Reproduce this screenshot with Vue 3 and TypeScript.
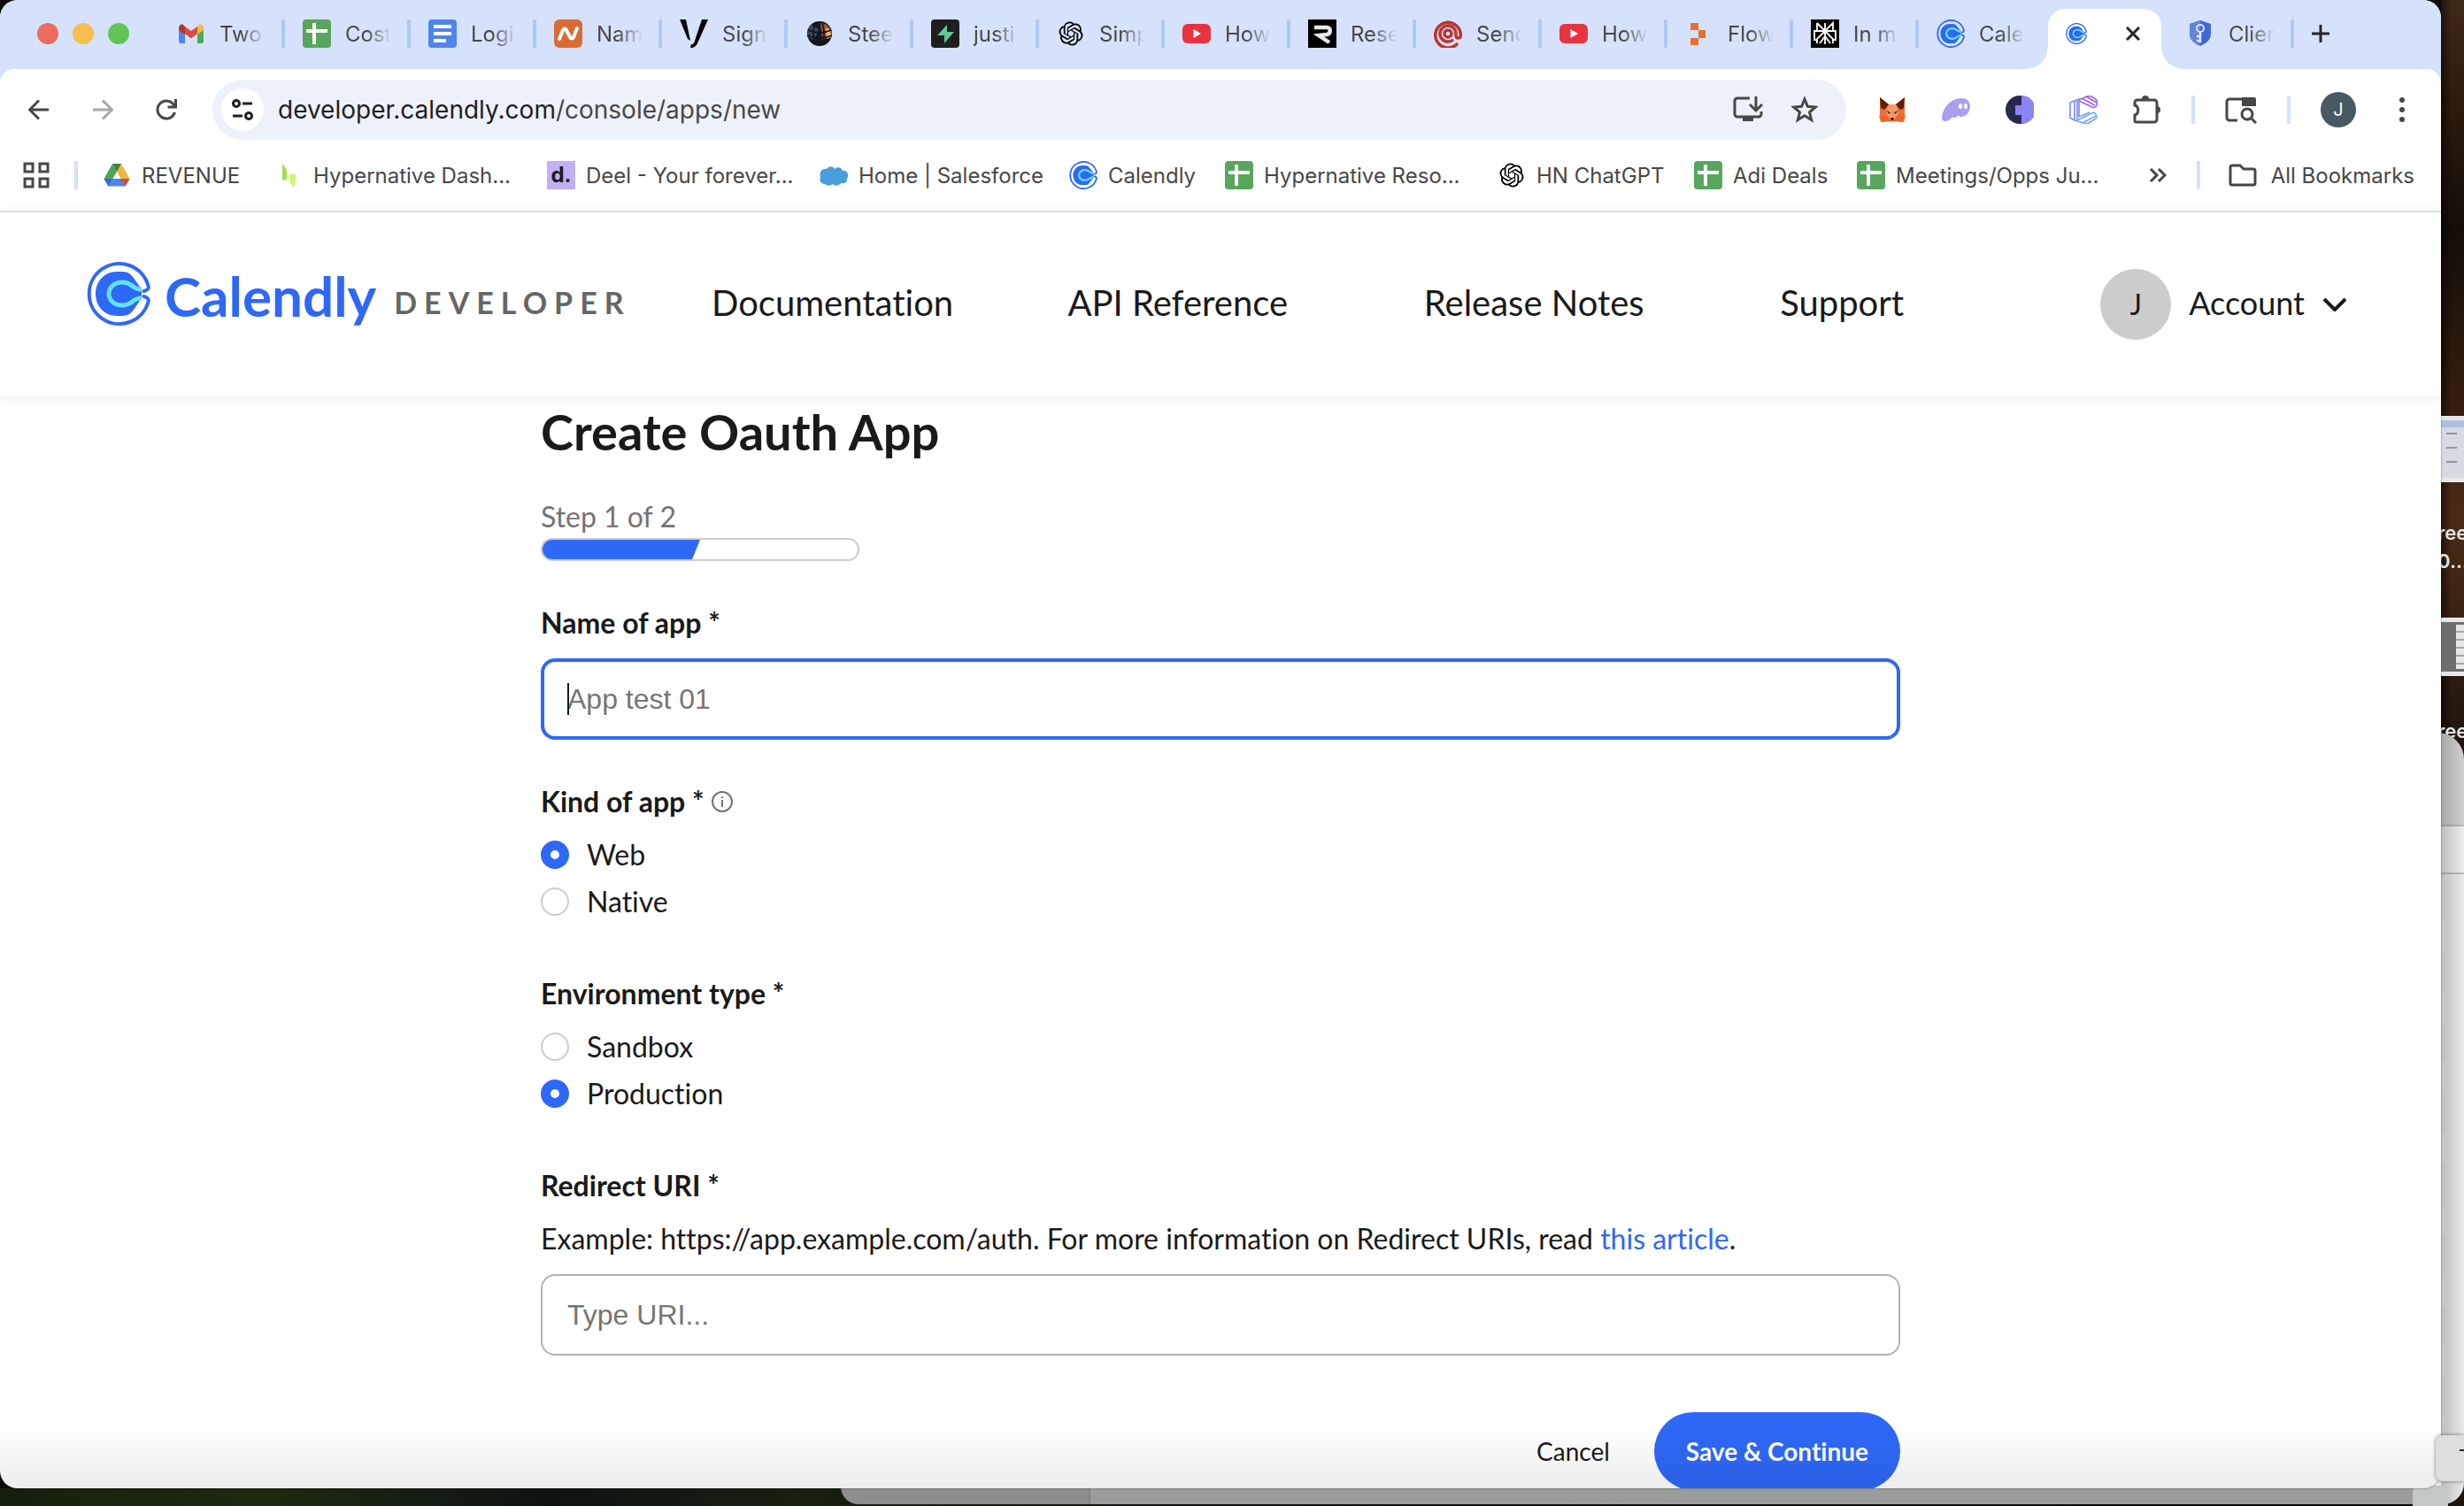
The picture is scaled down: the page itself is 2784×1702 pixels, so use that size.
<script setup lang="ts">
import { ref } from 'vue'

interface Tab {
  icon: string
  title: string
}

const openai =
  '<path transform="translate(2.5 2.5) scale(1.125)" d="M22.2819 9.8211a5.9847 5.9847 0 0 0-.5157-4.9108 6.0462 6.0462 0 0 0-6.5098-2.9A6.0651 6.0651 0 0 0 4.9807 4.1818a5.9847 5.9847 0 0 0-3.9977 2.9 6.0462 6.0462 0 0 0 .7427 7.0966 5.98 5.98 0 0 0 .511 4.9107 6.051 6.051 0 0 0 6.5146 2.9001A5.9847 5.9847 0 0 0 13.2599 24a6.0557 6.0557 0 0 0 5.7718-4.2058 5.9894 5.9894 0 0 0 3.9977-2.9001 6.0557 6.0557 0 0 0-.7475-7.0729zm-9.022 12.6081a4.4755 4.4755 0 0 1-2.8764-1.0408l.1419-.0804 4.7783-2.7582a.7948.7948 0 0 0 .3927-.6813v-6.7369l2.02 1.1686a.071.071 0 0 1 .038.052v5.5826a4.504 4.504 0 0 1-4.4945 4.4944zm-9.6607-4.1254a4.4708 4.4708 0 0 1-.5346-3.0137l.142.0852 4.783 2.7582a.7712.7712 0 0 0 .7806 0l5.8428-3.3685v2.3324a.0804.0804 0 0 1-.0332.0615L9.74 19.9502a4.4992 4.4992 0 0 1-6.1408-1.6464zM2.3408 7.8956a4.485 4.485 0 0 1 2.3655-1.9728V11.6a.7664.7664 0 0 0 .3879.6765l5.8144 3.3543-2.0201 1.1685a.0757.0757 0 0 1-.071 0l-4.8303-2.7865A4.504 4.504 0 0 1 2.3408 7.872zm16.5963 3.8558L13.1038 8.364 15.1192 7.2a.0757.0757 0 0 1 .071 0l4.8303 2.7913a4.4944 4.4944 0 0 1-.6765 8.1042v-5.6772a.79.79 0 0 0-.407-.667zm2.0107-3.0231l-.142-.0852-4.7735-2.7818a.7759.7759 0 0 0-.7854 0L9.409 9.2297V6.8974a.0662.0662 0 0 1 .0284-.0615l4.8303-2.7866a4.4992 4.4992 0 0 1 6.6802 4.66zM8.3065 12.863l-2.02-1.1638a.0804.0804 0 0 1-.038-.0567V6.0742a4.4992 4.4992 0 0 1 7.3757-3.4537l-.142.0805L8.704 5.459a.7948.7948 0 0 0-.3927.6813zm1.0976-2.3654l2.602-1.4998 2.6069 1.4998v2.9994l-2.5974 1.4997-2.6067-1.4997Z"/>'

const calendly =
  '<g transform="scale(.4445)"><path d="M69.500 27A34 34 0 1 0 69.500 45c1-3-1-5-5-6M69.500 27c1 3-1 5-5 6" fill="none" stroke="#2e68f7" stroke-width="4" stroke-linecap="round"/><path d="M34 11h6c8 0 11 4 15 10l7 10v10l-7 10c-4 6-7 10-15 10h-6C20 61 10 50 10 36S20 11 34 11z" fill="#2e68f7"/><path d="M62 31c-6 0-9-2-12-5-3-2-6-3-10-3-9 0-15 6-15 13s6 13 15 13c4 0 7-1 10-3 3-3 6-5 12-5" fill="none" stroke="#62e2f0" stroke-width="5"/></g>'

const icons: Record<string, string> = {
  openai,
  calendly,
  gmail:
    '<path d="M2 10v15a2 2 0 0 0 2 2h5V15z" fill="#4b85ee"/><path d="M30 10v15a2 2 0 0 1-2 2h-5V15z" fill="#4caa57"/><path d="M9 16V8l7 5 7-5v8l-7 5.500z" fill="#dc4b3e"/><path d="M2 10v2l7 5V8L7 6C5 4.500 2 6 2 10z" fill="#b5322a"/><path d="M30 10v2l-7 5V8l2-2c2-1.500 5 0 5 4z" fill="#f3bd42"/>',
  sheets:
    '<rect width="32" height="32" rx="4" fill="#58a55c"/><path d="M4 13h24M13 4v24" stroke="#fff" stroke-width="4"/>',
  docs: '<rect width="32" height="32" rx="4" fill="#5084ed"/><path d="M6 8h20M6 16h20M6 24h14" stroke="#fff" stroke-width="4"/>',
  name: '<rect width="32" height="32" rx="6" fill="#d96b36"/><path d="M6 22 10 12c1-2 3-2 4 0l4 8c1 2 3 2 4 0l4-10" fill="none" stroke="#fff" stroke-width="4" stroke-linecap="round"/>',
  vee: '<path d="M0 0h7l5 24-3-2z"/><path d="M25 0h7L20 27c-2 4-4 5-8 5l1-4c3 0 3-1 4-4z"/>',
  disco:
    '<circle cx="16" cy="16" r="14" fill="#15171f"/><path d="M3 20a14 14 0 0 1 4-14l8 5-5 13z" fill="#3c4763"/><path d="M17 4a13 13 0 0 1 13 14l-11 5z" fill="#9a5230"/><path d="M23 9l5 3 1 8-5 2z" fill="#f3b47c"/><path d="M3 12q13 6 26 0M2 18q14 6 28 0M11 3q-4 13 0 26M19 3q4 13 0 26" fill="none" stroke="#10131b" stroke-width="1.500"/>',
  bolt: '<rect width="32" height="32" rx="4" fill="#1e1e1e"/><path d="M18 6v8h8L15 27v-9H7z" fill="#5fc792"/>',
  youtube: '<rect y="5" width="32" height="22" rx="6" fill="#ea3340"/><path d="M12.500 11v10l8.500-5z" fill="#fff"/>',
  resend: '<path d="M0 0h32v32H0z"/><path d="M7 9h14c5 0 5 7 0 8l-9 1 12 8" fill="none" stroke="#e8e8e8" stroke-width="4.500"/>',
  at: '<g fill="none" stroke="#b93632" stroke-width="3.500"><path d="M27 27A14.300 14.300 0 1 1 30.300 16v2c0 4-5.300 4-5.300 0v-2a9 9 0 1 0-3 6.800"/><circle cx="16" cy="16" r="4"/></g>',
  flow: '<path d="M6 4h9v8H6zM6 21h9v8H6zM15 12h8v9h-8z" fill="#e6702f"/>',
  plex: '<path d="M0 0h32v32H0z"/><path d="M16 4v24M7 4l9 9 9-9v9M7 4v9M16 13l-9 9v5M16 13l9 9v5M7 13H4v10h4M25 13h3v10h-4M4 13h24M10 27l6-8 6 8" fill="none" stroke="#fff" stroke-width="1.800"/>',
  shield:
    '<path d="M16 1 28 5v11c0 7-5 11-12 14C9 27 4 23 4 16V5z" fill="#4068d4"/><path d="M16 1v29C9 27 4 23 4 16V5z" fill="#6485dc"/><circle cx="16" cy="10" r="4" fill="none" stroke="#dce8ff" stroke-width="2"/><path d="M16 14v12M16 19h-4M16 24h-4" stroke="#dce8ff" stroke-width="2.500"/>',
  drive:
    '<path d="M11 3h10l9.500 17h-10z" fill="#f0b63d"/><path d="M11 3 1.500 20l5 8.500L16 12z" fill="#4fa35b"/><path d="M6.500 28.500 11 20h19.500l-5 8.500z" fill="#5084ed"/><path d="M20.500 20h10l-5 8.500z" fill="#dc4b3e"/><path d="M1.500 20H11l-4.500 8.500z" fill="#3568d4"/><path d="M11 3h10l-5 9z" fill="#3a8344"/>',
  hyper: '<path d="M9 3l5 7v5h10v8l-2 7-4-6v-4l-9 1z" fill="#cdf76c"/><path d="M9 3l5 7v11l-5 1z" fill="#a6da55"/><circle cx="16" cy="17" r="2" fill="#f0ffd0"/>',
  cloud:
    '<path d="M6 26c-4 0-7-4-5-8-2-5 2-10 7-9 3-4 8-3 9 0 3-3 8-2 9 2 5-1 8 4 5 9 0 5-4 6-7 5-2 3-7 4-9 1-3 2-7 2-9 0z" fill="#4a9ddb"/>',
}

const tabs: Tab[] = [
  { icon: 'gmail', title: 'Two-' },
  { icon: 'sheets', title: 'Cost' },
  { icon: 'docs', title: 'Logi' },
  { icon: 'name', title: 'Nam' },
  { icon: 'vee', title: 'Sign' },
  { icon: 'disco', title: 'Stee' },
  { icon: 'bolt', title: 'justi' },
  { icon: 'openai', title: 'Simp' },
  { icon: 'youtube', title: 'How' },
  { icon: 'resend', title: 'Rese' },
  { icon: 'at', title: 'Send' },
  { icon: 'youtube', title: 'How' },
  { icon: 'flow', title: 'Flow' },
  { icon: 'plex', title: 'In m' },
  { icon: 'calendly', title: 'Cale' },
]

const bookmarks: Tab[] = [
  { icon: 'drive', title: 'REVENUE' },
  { icon: 'hyper', title: 'Hypernative Dash...' },
  { icon: 'deel', title: 'Deel - Your forever...' },
  { icon: 'cloud', title: 'Home | Salesforce' },
  { icon: 'calendly', title: 'Calendly' },
  { icon: 'sheets', title: 'Hypernative Reso...' },
  { icon: 'openai', title: 'HN ChatGPT' },
  { icon: 'sheets', title: 'Adi Deals' },
  { icon: 'sheets', title: 'Meetings/Opps Ju...' },
]

const navLinks = ['Documentation', 'API Reference', 'Release Notes', 'Support']

const address = ref('')
const kind = ref('Web')
const environment = ref('Production')
const appName = ref('')
const redirectUri = ref('')
</script>

<template>
  <div class="desktop">
    <div class="side" aria-hidden="true">
      <div class="thumb thumb-sheet"><i></i><i></i><i></i></div>
      <div class="thumb thumb-form"><i></i></div>
      <span class="file-name file-a">ree<br />0...</span>
      <span class="file-name file-b">ree</span>
    </div>
    <div class="back-window" aria-hidden="true">
      <div class="back-rows"><i v-for="n in 9" :key="n"></i></div>
    </div>

    <div class="window">
      <div class="tabstrip">
        <div class="lights">
          <button class="light red" aria-label="Close window"></button>
          <button class="light amber" aria-label="Minimise window"></button>
          <button class="light green" aria-label="Zoom window"></button>
        </div>
        <button v-for="(tab, i) in tabs" :key="i" class="tab">
          <svg class="ico" viewBox="0 0 32 32" v-html="icons[tab.icon]"></svg>
          <span class="tab-title">{{ tab.title }}</span>
        </button>
        <div class="active-slot">
          <div class="tab-active">
            <svg class="ico-small" viewBox="0 0 32 32" v-html="icons.calendly"></svg>
            <button class="close" aria-label="Close tab">
              <svg viewBox="0 0 16 16"><path d="M1 1l14 14M15 1L1 15" /></svg>
            </button>
          </div>
        </div>
        <button class="tab last">
          <svg class="ico" viewBox="0 0 32 32" v-html="icons.shield"></svg>
          <span class="tab-title">Clien</span>
        </button>
        <button class="plus" aria-label="New tab">
          <svg viewBox="0 0 20 20"><path d="M10 0v20M0 10h20" /></svg>
        </button>
      </div>

      <div class="chrome">
        <div class="toolbar">
          <div class="nav-buttons">
            <button aria-label="Back">
              <svg viewBox="0 0 24 24"><path d="M23 12H2M12 1.500 1.500 12 12 22.500" /></svg>
            </button>
            <button class="dim" aria-label="Forward">
              <svg viewBox="0 0 24 24"><path d="M1 12h21M12 1.500 22.500 12 12 22.500" /></svg>
            </button>
            <button aria-label="Reload">
              <svg viewBox="0 0 24 24"><path d="M21.500 15A10 10 0 1 1 20 6l2.500 3M22.500 0v9h-9" /></svg>
            </button>
          </div>
          <div class="omnibox">
            <button class="site-info" aria-label="Site information">
              <svg viewBox="0 0 24 24">
                <circle cx="5" cy="5" r="3.500" /><path d="M12 5h11M1 19h11" /><circle cx="19" cy="19" r="3.500" />
              </svg>
            </button>
            <label class="url">
              <span>developer.calendly.com</span><span class="path">/console/apps/new</span>
              <input v-model="address" aria-label="Address" />
            </label>
            <button aria-label="Install">
              <svg class="w34" viewBox="0 0 34 30">
                <path d="M19 2H5a3 3 0 0 0-3 3v15a3 3 0 0 0 3 3h24a3 3 0 0 0 3-3v-3M26 0v15M19 9l7 7 7-7" />
                <path d="M11 23h12v5H11z" fill="currentColor" stroke="none" />
              </svg>
            </button>
            <button aria-label="Bookmark this page">
              <svg class="w30" viewBox="0 0 30 30">
                <path d="M15 3l3.400 8.300 9 .7-6.900 5.800 2.200 8.700-7.700-4.700-7.700 4.700 2.200-8.700L2.600 12l9-.7z" />
              </svg>
            </button>
          </div>
          <div class="extensions">
            <button aria-label="Wallet">
              <svg viewBox="0 0 32 32">
                <path d="M2 2l10 8h8l10-8v20l1 1-2 7-8-1-5 2-5-2-8 1-2-7 1-1z" fill="#e8713a" />
                <path d="M2 2l10 8-5 6-4-2zM30 2l-10 8 5 6 4-2z" fill="#5f1e0c" />
                <path d="M12 10h8l3 9-4 8h-6l-4-8z" fill="#f39a6c" />
                <path d="M9 17l5 2-1 2zM23 17l-5 2 1 2z" fill="#3c1d14" />
                <path d="M3 23l8 0 3 5-9 2zM29 23l-8 0-3 5 9 2z" fill="#ee6228" />
                <path d="M13 29h6l-1 2h-4z" fill="#e3dcd8" /><path d="M14 25h4l-1 3h-2z" fill="#2a1410" />
              </svg>
            </button>
            <button aria-label="Ghost">
              <svg viewBox="0 0 32 32">
                <path d="M0 25C1 14 10 3 22 3c7 0 10 4 10 9 0 7-5 12-10 12-2 0-3-1-3-2-2 3-6 4-7 2-3 4-6 5-8 5s-4-1-4-4z" fill="#ab9ff0" />
                <ellipse cx="21" cy="12" rx="2" ry="3" fill="#fff" /><ellipse cx="27" cy="12" rx="2" ry="3" fill="#fff" />
              </svg>
            </button>
            <button aria-label="Contrast">
              <svg viewBox="0 0 32 32">
                <circle cx="16" cy="16" r="16" fill="#28274c" />
                <path d="M18 0a16 16 0 0 1 0 32V22h-7V11h7z" fill="#8a85f5" />
              </svg>
            </button>
            <button aria-label="Ribbon">
              <svg viewBox="0 0 32 32" fill="none" stroke-width="1.600">
                <path d="M11 5 20 1c2-1 3-1 5 0l6 4c1 1 1 3 0 6-1 2-3 3-5 2L11 6M14 3l15 8M19 1l12 7" stroke="#9b5fec" />
                <path d="M1 8 11 4v20M1 8v17l5 3V6M9 5v24" stroke="#7c8cf0" />
                <path d="M6 28l10 3c2 1 4 1 6 0l8-5c1-1 1-3 0-5-1-2-3-2-5-1L9 28M11 24l12-5M15 31l15-8" stroke="#6fa8ee" />
              </svg>
            </button>
            <button aria-label="Extensions">
              <svg class="line" viewBox="0 0 32 32">
                <path d="M2 8a3 3 0 0 1 3-3h19a3 3 0 0 1 3 3v19a3 3 0 0 1-3 3H4a2 2 0 0 1-2-2v-6c5-1 5-10 0-11z" />
                <path d="M10 4a4 4 0 0 1 8 0zM27 12a4 4 0 0 1 0 8z" fill="currentColor" stroke="none" />
              </svg>
            </button>
            <i class="bar"></i>
            <button aria-label="Search side panel">
              <svg class="w36" viewBox="0 0 36 32">
                <path d="M14 28H5a3 3 0 0 1-3-3V7a3 3 0 0 1 3-3h27M29 25l6 6" />
                <path d="M19 2h14a2 2 0 0 1 2 2v8H19z" fill="currentColor" stroke="none" /><circle cx="25" cy="21" r="6" />
              </svg>
            </button>
            <i class="bar"></i>
            <button class="profile" aria-label="Profile J">J</button>
            <button class="more" aria-label="Menu">
              <svg viewBox="0 0 8 32">
                <g fill="currentColor" stroke="none"><circle cx="4" cy="5" r="3" /><circle cx="4" cy="16" r="3" /><circle cx="4" cy="27" r="3" /></g>
              </svg>
            </button>
          </div>
        </div>

        <div class="bookmarks">
          <button class="apps" aria-label="Apps">
            <svg viewBox="0 0 30 30"><path d="M2 2h9v9H2zM19 2h9v9h-9zM2 19h9v9H2zM19 19h9v9h-9z" /></svg>
          </button>
          <i class="bar"></i>
          <div class="bookmark-list">
            <a v-for="(mark, i) in bookmarks" :key="i" href="#" class="bookmark">
              <span v-if="mark.icon === 'deel'" class="deel">d.</span>
              <svg v-else class="ico" viewBox="0 0 32 32" v-html="icons[mark.icon]"></svg>
              {{ mark.title }}
            </a>
          </div>
          <button class="overflow" aria-label="More bookmarks">
            <svg viewBox="0 0 20 18"><path d="M2 2l7 7-7 7M11 2l7 7-7 7" /></svg>
          </button>
          <i class="bar"></i>
          <button class="all">
            <svg viewBox="0 0 32 26"><path d="M2 4a2 2 0 0 1 2-2h9l4 4h11a2 2 0 0 1 2 2v14a2 2 0 0 1-2 2H4a2 2 0 0 1-2-2z" /></svg>
            All Bookmarks
          </button>
        </div>
      </div>

      <header class="site-header">
        <a class="brand" href="#">
          <svg class="brand-mark" viewBox="0 0 32 32" v-html="icons.calendly"></svg>
          <span class="brand-name">Calendly</span>
          <span class="brand-sub">DEVELOPER</span>
        </a>
        <nav class="site-nav">
          <a v-for="link in navLinks" :key="link" href="#">{{ link }}</a>
        </nav>
        <button class="account">
          <span class="avatar">J</span>
          <span class="account-name">Account</span>
          <svg viewBox="0 0 28 16"><path d="M2 2l12 12L26 2" /></svg>
        </button>
      </header>

      <main class="page">
        <form class="form" @submit.prevent>
          <h1>Create Oauth App</h1>
          <p class="step">Step 1 of 2</p>
          <div class="progress" role="progressbar" aria-valuenow="1" aria-valuemin="0" aria-valuemax="2"><i></i></div>

          <label class="label" for="app-name">Name of app *</label>
          <div class="field">
            <input id="app-name" v-model="appName" class="text focused" type="text" placeholder="App test 01" />
            <i class="caret"></i>
          </div>

          <fieldset>
            <legend class="label">
              Kind of app *
              <svg class="info" viewBox="0 0 24 24"><circle cx="12" cy="12" r="11" /><path d="M12 10v8M12 6v2" /></svg>
            </legend>
            <label class="option"><input v-model="kind" type="radio" name="kind" value="Web" />Web</label>
            <label class="option"><input v-model="kind" type="radio" name="kind" value="Native" />Native</label>
          </fieldset>

          <fieldset>
            <legend class="label">Environment type *</legend>
            <label class="option"><input v-model="environment" type="radio" name="env" value="Sandbox" />Sandbox</label>
            <label class="option"><input v-model="environment" type="radio" name="env" value="Production" />Production</label>
          </fieldset>

          <label class="label" for="redirect-uri">Redirect URI *</label>
          <p class="hint">
            Example: https://app.example.com/auth. For more information on Redirect URIs, read <a href="#">this article</a>.
          </p>
          <input id="redirect-uri" v-model="redirectUri" class="text" type="text" placeholder="Type URI..." />

          <div class="actions">
            <button type="button" class="cancel">Cancel</button>
            <button type="submit" class="save">Save &amp; Continue</button>
          </div>
        </form>
      </main>
    </div>

    <div class="peek" aria-hidden="true"><i></i></div>
  </div>
</template>

<style>
body {
  margin: 0;
  overflow: hidden;
}
</style>

<style scoped>
* {
  box-sizing: border-box;
}
button {
  margin: 0;
  padding: 0;
  border: 0;
  background: none;
  font: inherit;
  color: inherit;
}
a {
  color: inherit;
  text-decoration: none;
}
svg {
  display: block;
  flex: none;
}
p,
h1 {
  margin: 0;
}

.desktop {
  position: relative;
  display: flex;
  height: 100vh;
  padding: 0 26px 20px 0;
  overflow: hidden;
  background:
    linear-gradient(90deg, #14200e 0, #1d2b10 300px, #0c1413 620px, #16210f 900px, #120f0a 1500px, #0c0906 100%) bottom / 100% 20px no-repeat,
    #0b0c08;
  font-family: Inter, 'Liberation Sans', sans-serif;
  color: #474747;
}
.side {
  position: absolute;
  top: 0;
  right: 0;
  bottom: 0;
  width: 26px;
  background: linear-gradient(90deg, rgba(0, 0, 0, 0.5), transparent 12px), linear-gradient(#3f2918, #2b1a0d 120px, #150d06 260px, #2a190d 400px, #4a2a16 580px, #3d2413 680px, #20150d 830px);
}
.thumb {
  position: absolute;
  left: 0;
  width: 26px;
  border: solid #e8e8e8;
  border-width: 5px 0;
}
.thumb-sheet {
  top: 470px;
  height: 75px;
  background: linear-gradient(#aebfe0 8px, #d6dbe2 8px);
}
.thumb-sheet i {
  display: block;
  width: 12px;
  height: 2px;
  margin: 14px 0 0 6px;
  background: #8d9694;
}
.thumb-form {
  top: 698px;
  height: 66px;
  background: #6e6e6e;
}
.thumb-form i {
  display: block;
  height: 50px;
  margin: 3px 0 0 17px;
  background: repeating-linear-gradient(#e6e6e6 0 7px, #a5a5a5 7px 9px);
}
.file-name {
  position: absolute;
  left: -4px;
  font-size: 22px;
  line-height: 32px;
  font-weight: 600;
  color: #e2e2e2;
}
.file-a {
  top: 586px;
}
.file-b {
  top: 810px;
}
.back-window {
  position: absolute;
  top: 828px;
  right: 0;
  bottom: 2px;
  left: 950px;
  padding-top: 211px;
  border-radius: 0 30px 24px 20px;
  background:
    linear-gradient(90deg, rgba(0, 0, 0, 0.2), transparent) right / 26px 100% no-repeat,
    linear-gradient(90deg, #8e8e8e 280px, #828382 280px 282px, #9b9d9c 282px, #9b9d9c 1790px, transparent 1800px) bottom / 100% 20px no-repeat,
    linear-gradient(#d0d0d0 104px, #b8b8b8 104px 106px, #ededed 106px 158px, #bdbdbd 158px 160px, #ebebeb 160px);
}
.back-rows {
  display: flex;
  flex-direction: column;
  align-items: flex-end;
  gap: 42px;
  padding-right: 18px;
}
.back-rows i {
  width: 40px;
  height: 38px;
  border-radius: 8px;
  background: #c3c7c6;
}
.peek {
  position: absolute;
  right: 0;
  bottom: 28px;
  width: 32px;
  height: 52px;
  padding: 16px 0 0 27px;
  border-radius: 8px 0 0 8px;
  background: #dededd;
  box-shadow: 0 0 4px rgba(0, 0, 0, 0.5);
}
.peek i {
  display: block;
  height: 2px;
  background: #1d2a2a;
}

.window {
  position: relative;
  flex: 1;
  min-width: 0;
  overflow: hidden;
  border-radius: 20px;
  background: #fff;
  box-shadow: 0 0 2px rgba(0, 0, 0, 0.6);
}
.window::after {
  content: '';
  position: absolute;
  right: 0;
  bottom: 0;
  left: 0;
  height: 72px;
  background: linear-gradient(transparent, rgba(0, 0, 0, 0.07));
  pointer-events: none;
}

.tabstrip {
  display: flex;
  align-items: center;
  height: 78px;
  padding-bottom: 2px;
  background: #d6e2fb;
  font-size: 24px;
}
.lights {
  display: flex;
  gap: 16px;
  width: 180px;
  padding-left: 42px;
}
.light {
  width: 24px;
  height: 24px;
  border-radius: 50%;
}
.red {
  background: #ec6a5e;
}
.amber {
  background: #f4bf4f;
}
.green {
  background: #61c454;
}
.tab {
  display: flex;
  align-items: center;
  gap: 16px;
  width: 142px;
  height: 32px;
  padding-left: 20px;
  border-right: 4px solid #aec8f6;
}
.active-slot {
  display: flex;
  align-self: flex-end;
  width: 140px;
  margin-bottom: -2px;
  padding: 0 8px 0 4px;
}
.tab:has(+ .active-slot) {
  border-color: transparent;
}
.ico {
  width: 32px;
  height: 32px;
}
.tab-title {
  width: 52px;
  overflow: hidden;
  text-align: left;
  white-space: nowrap;
  mask-image: linear-gradient(90deg, #000 24px, transparent 52px);
}
.tab-active {
  position: relative;
  display: flex;
  flex: 1;
  align-items: center;
  justify-content: space-between;
  height: 68px;
  padding: 0 24px 12px 20px;
  border-radius: 20px 20px 0 0;
  background: #fff;
}
.tab-active::before,
.tab-active::after {
  content: '';
  position: absolute;
  bottom: 0;
  width: 24px;
  height: 24px;
}
.tab-active::before {
  right: 100%;
  background: radial-gradient(circle at 0 0, transparent 23px, #fff 24px);
}
.tab-active::after {
  left: 100%;
  background: radial-gradient(circle at 100% 0, transparent 23px, #fff 24px);
}
.ico-small {
  width: 24px;
  height: 24px;
}
.close svg {
  width: 16px;
  height: 16px;
}
.close svg,
.plus svg {
  fill: none;
  stroke: #262626;
  stroke-width: 3;
}
.plus {
  margin-left: 20px;
}
.plus svg {
  width: 20px;
  height: 20px;
}

.chrome {
  border-bottom: 2px solid #e2e2e2;
  background: linear-gradient(#d6e2fb, #d6e2fb) top / 100% 16px no-repeat;
}
.toolbar {
  display: flex;
  align-items: center;
  height: 92px;
  border-radius: 16px 16px 0 0;
  background: #fff;
}
.toolbar svg {
  width: 32px;
  height: 32px;
}
.nav-buttons {
  display: flex;
  gap: 48px;
  width: 240px;
  padding-left: 32px;
}
.nav-buttons svg {
  width: 24px;
  height: 24px;
}
.nav-buttons svg,
.omnibox svg,
.line,
.toolbar .w36,
.bookmarks button svg {
  fill: none;
  stroke: currentColor;
  stroke-width: 3;
}
.dim {
  color: #a8a8a8;
}
.omnibox {
  display: flex;
  flex: 1;
  align-items: center;
  gap: 32px;
  height: 68px;
  padding: 0 32px 0 10px;
  border-radius: 34px;
  background: #edf2fa;
}
.site-info {
  display: flex;
  align-items: center;
  justify-content: center;
  width: 48px;
  height: 48px;
  border-radius: 50%;
  background: #fff;
  color: #1f1f1f;
}
.site-info svg {
  width: 24px;
  height: 24px;
}
.toolbar .w34 {
  width: 34px;
  height: 30px;
}
.toolbar .w30 {
  width: 30px;
  height: 30px;
}
.toolbar .w36 {
  width: 36px;
}
.url {
  display: flex;
  flex: 1;
  margin-left: -16px;
  font-size: 28px;
  color: #1f1f1f;
}
.url .path {
  color: #474747;
}
.url input {
  flex: 1;
  min-width: 0;
  border: 0;
  background: none;
  outline: none;
}
.extensions {
  display: flex;
  align-items: center;
  gap: 40px;
  padding: 0 40px 0 36px;
}
.extensions .bar {
  margin: 0 -6px;
}
.bar {
  flex: none;
  width: 4px;
  height: 32px;
  background: #d3e2fc;
}
.profile {
  width: 40px;
  height: 40px;
  border-radius: 50%;
  background: #475962;
  font-size: 20px;
  color: #fff;
}
.more {
  margin-left: 8px;
}
.toolbar .more svg {
  width: 8px;
}
.bookmarks {
  display: flex;
  align-items: center;
  height: 68px;
  padding: 0 30px 12px 26px;
  background: #fff;
  font-size: 24px;
}
.apps {
  margin-right: 28px;
}
.apps svg {
  width: 30px;
  height: 30px;
}
.bookmark-list {
  display: grid;
  flex: 1;
  grid-template-columns: 194px 308px 308px 282px 176px 308px 222px 184px auto;
  padding-left: 28px;
  white-space: nowrap;
}
.bookmark {
  display: flex;
  align-items: center;
  gap: 12px;
}
.deel {
  width: 32px;
  height: 32px;
  background: #c0b0f4;
  font-weight: 700;
  line-height: 32px;
  text-align: center;
  color: #1b1b1b;
}
.overflow {
  margin-right: 34px;
}
.overflow svg {
  width: 20px;
  height: 18px;
}
.all {
  display: flex;
  align-items: center;
  gap: 16px;
  margin-left: 32px;
  white-space: nowrap;
}
.all svg {
  width: 32px;
  height: 26px;
}

.site-header {
  display: flex;
  align-items: center;
  height: 208px;
  padding: 0 106px 0 98px;
  box-shadow: 0 2px 16px rgba(0, 0, 0, 0.08);
  font-family: Lato, sans-serif;
  font-variant-ligatures: none;
  color: #1a1a1a;
}
.brand {
  display: flex;
  align-items: center;
  width: 706px;
}
.brand-mark {
  width: 72px;
  height: 72px;
  margin-bottom: 24px;
}
.brand-name {
  margin: 0 20px 20px 16px;
  font-size: 62px;
  font-weight: 700;
  line-height: 80px;
  color: #2e68f7;
}
.brand-sub {
  padding-bottom: 6px;
  font-size: 34px;
  font-weight: 700;
  letter-spacing: 8px;
  color: #666;
}
.site-nav {
  display: grid;
  flex: 1;
  grid-template-columns: repeat(3, 1fr) 362px;
  padding-bottom: 4px;
  font-size: 40px;
}
.account {
  display: flex;
  align-items: center;
  gap: 20px;
  font-size: 36px;
}
.account-name {
  padding-bottom: 4px;
}
.account svg {
  width: 28px;
  height: 16px;
  fill: none;
  stroke: #1a1a1a;
  stroke-width: 4;
}
.avatar {
  width: 80px;
  height: 80px;
  border-radius: 50%;
  background: #ccc;
  font-size: 32px;
  line-height: 80px;
}

.page {
  font-family: Lato, sans-serif;
  font-size: 32px;
  font-variant-ligatures: none;
  line-height: 48px;
  color: #1a1a1a;
}
.form {
  width: 1536px;
  max-width: 100%;
  margin: 0 auto;
}
h1 {
  padding-top: 8px;
  font-size: 56px;
  line-height: 64px;
}
.step {
  margin-top: 40px;
  color: #737373;
}
.progress {
  width: 360px;
  height: 26px;
  overflow: hidden;
  border: 2px solid #ccc;
  border-radius: 13px;
}
.progress i {
  display: block;
  width: 50%;
  height: 100%;
  background: #2e68f7;
  clip-path: polygon(0 0, 100% 0, 95% 100%, 0 100%);
}
.label {
  display: block;
  padding: 0;
  font-weight: 700;
}
.form > .label {
  margin-top: 46px;
}
.field {
  position: relative;
  margin-top: 16px;
}
.text {
  display: block;
  width: 100%;
  height: 92px;
  padding: 0 28px;
  border: 2px solid #b2b2b2;
  border-radius: 16px;
  outline: none;
  background: #fff;
  font: 32px 'Liberation Sans', Arial, sans-serif;
  color: #1a1a1a;
}
.text::placeholder {
  color: #757575;
}
.focused {
  padding: 0 26px;
  border: 4px solid #2e68f7;
}
.caret {
  position: absolute;
  top: 28px;
  left: 30px;
  width: 2px;
  height: 36px;
  background: #1a1a1a;
}
fieldset {
  min-width: 0;
  margin: 46px 0 0;
  padding: 0 0 8px;
  border: 0;
}
legend.label {
  display: flex;
  align-items: center;
  gap: 8px;
  margin-bottom: 9px;
}
.info {
  width: 24px;
  height: 24px;
  fill: none;
  stroke: #737373;
  stroke-width: 2;
}
.option {
  display: flex;
  align-items: center;
  gap: 20px;
  height: 53px;
}
.option input {
  width: 32px;
  height: 32px;
  margin: 0;
  border: 2px solid #ccc;
  border-radius: 50%;
  background: #fff;
  appearance: none;
}
.option input:checked {
  border: 11px solid #2e68f7;
}
.hint {
  margin: 12px 0 16px;
}
.hint a {
  color: #2e68f7;
}
.actions {
  display: flex;
  justify-content: flex-end;
  align-items: center;
  gap: 50px;
  margin-top: 64px;
  font-size: 28px;
}
.save {
  height: 88px;
  padding: 0 36px;
  border-radius: 44px;
  background: #2e68f7;
  font-weight: 700;
  color: #fff;
}
</style>
